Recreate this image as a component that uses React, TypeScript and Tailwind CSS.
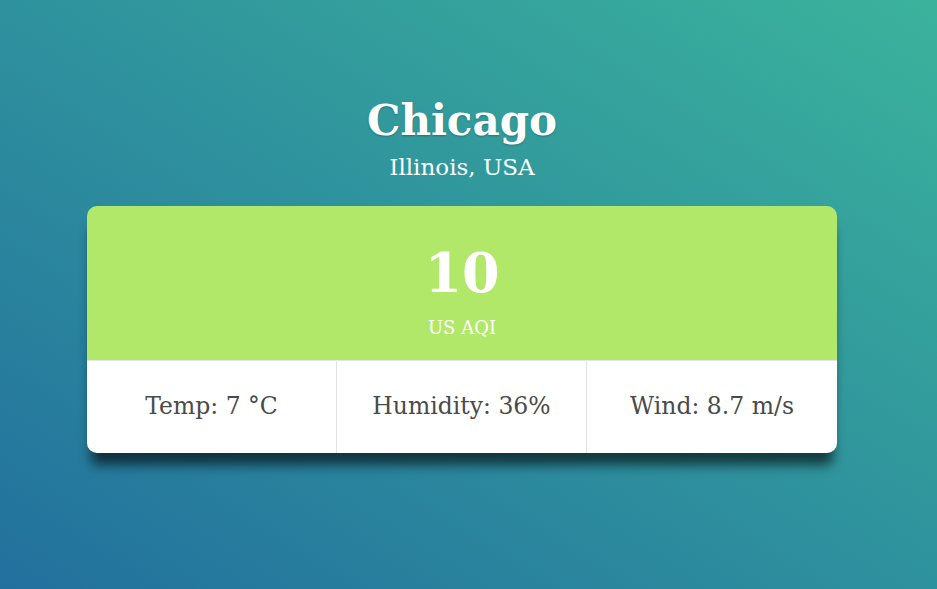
export default function App() {
  const font = { fontFamily: '"DejaVu Serif", "Liberation Serif", serif' };
  return (
    <div
      className="w-[937px] h-[589px] bg-[linear-gradient(to_top_right,#22709e,#3bb39c)] flex flex-col items-center pt-[92px] pr-[13px]"
      style={font}
    >
      <h1 className="text-white font-bold text-[42px] leading-[58px] [text-shadow:0_1px_2px_rgba(0,0,0,0.25)]">Chicago</h1>
      <div className="text-white text-[23px] leading-[30px] mt-[2px]">Illinois, USA</div>
      <div className="mt-[24px] w-[750px] rounded-[10px] overflow-hidden shadow-[0_16px_12px_-4px_rgba(0,0,0,0.6)]">
        <div className="bg-[#b2e86a] h-[154px] flex flex-col items-center pt-[35px]">
          <div className="text-white font-bold text-[54px] leading-[64px]">10</div>
          <div className="text-white text-[18px] leading-[24px] mt-[11px]">US AQI</div>
        </div>
        <div className="bg-white grid grid-cols-3 h-[93px] border-t border-[#e6e6e6]">
          <div className="flex items-center justify-center text-[#4a4a4a] text-[23.5px] border-r border-[#e3e3e3]">Temp: 7 °C</div>
          <div className="flex items-center justify-center text-[#4a4a4a] text-[23.5px] border-r border-[#e3e3e3]">Humidity: 36%</div>
          <div className="flex items-center justify-center text-[#4a4a4a] text-[23.5px]">Wind: 8.7 m/s</div>
        </div>
      </div>
    </div>
  );
}
